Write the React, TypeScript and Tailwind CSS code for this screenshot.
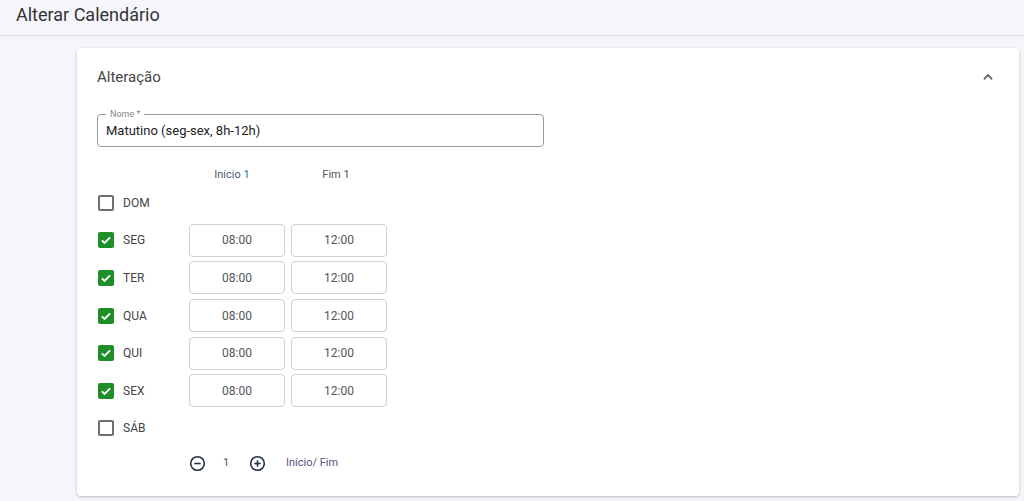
import React from "react";

type Day = { label: string; checked: boolean };

const DAYS: Day[] = [
  { label: "DOM", checked: false },
  { label: "SEG", checked: true },
  { label: "TER", checked: true },
  { label: "QUA", checked: true },
  { label: "QUI", checked: true },
  { label: "SEX", checked: true },
  { label: "SÁB", checked: false },
];

function Check({ checked }: { checked: boolean }) {
  if (checked) {
    return (
      <span className="flex h-[16px] w-[16px] items-center justify-center rounded-[2px] bg-[#1e8f28]">
        <svg viewBox="0 0 24 24" className="h-[14px] w-[14px]" fill="none" stroke="#fff" strokeWidth="3.2">
          <path d="M5 12.5l4.5 4.5L19 7.5" />
        </svg>
      </span>
    );
  }
  return <span className="h-[16px] w-[16px] rounded-[2px] border-2 border-[#6f6f6f] bg-white" />;
}

function TimeBox({ value }: { value: string }) {
  return (
    <div className="flex h-[33px] w-[96px] items-center justify-center rounded-[4px] border border-[#d0d0d0] bg-white text-[12px] text-[#555]">
      {value}
    </div>
  );
}

function CircleIcon({ plus }: { plus?: boolean }) {
  return (
    <svg viewBox="0 0 24 24" className="h-[17px] w-[17px]" fill="none" stroke="#27324a" strokeWidth="2.3">
      <circle cx="12" cy="12" r="9.6" />
      <path d="M7.5 12h9" />
      {plus && <path d="M12 7.5v9" />}
    </svg>
  );
}

export default function App() {
  return (
    <div className="min-h-[501px] bg-[#f5f5fc] font-['Roboto',sans-serif]">
      <header className="flex h-[36px] items-center border-b border-[#dcdce4] px-[16px]">
        <h1 className="text-[18px] text-[#333] -mt-[6px]">Alterar Calendário</h1>
      </header>

      <div className="ml-[77px] mr-[5px] mt-[12px] rounded-[4px] bg-white px-[20px] pb-[23px] pt-[20px] shadow-[0_1px_3px_rgba(0,0,0,0.25)]">
        <div className="flex h-[18px] items-center justify-between">
          <h2 className="text-[15px] text-[#444]">Alteração</h2>
          <svg viewBox="0 0 24 24" className="mr-[2px] h-[18px] w-[18px]" fill="none" stroke="#666" strokeWidth="2.4">
            <path d="M6.5 15l5.5-5.5 5.5 5.5" />
          </svg>
        </div>

        <div className="relative mt-[28px] h-[33px] w-[447px] rounded-[4px] border border-[#9a9a9a]">
          <span className="absolute -top-[7px] left-[8px] bg-white px-[4px] text-[9px] leading-[12px] text-[#888]">
            Nome *
          </span>
          <div className="flex h-full items-center pl-[8px] text-[13px] text-[#222]">
            Matutino (seg-sex, 8h-12h)
          </div>
        </div>

        <div className="mt-[21px] grid grid-cols-[86px_96px_96px] gap-x-[6px]">
          <div />
          <div className="pr-[10px] text-center text-[11px] leading-[14px] text-[#4a5a6e]">
            Início <span className="text-[#2b6cb0]">1</span>
          </div>
          <div className="pr-[6px] text-center text-[11px] leading-[14px] text-[#555]">Fim 1</div>
        </div>

        <div className="mt-[2px] flex flex-col">
          {DAYS.map((d) => (
            <div key={d.label} className="grid h-[37.6px] grid-cols-[86px_96px_96px] items-center gap-x-[6px]">
              <div className="flex items-center gap-[9px] pl-[1px]">
                <Check checked={d.checked} />
                <span className="text-[12px] text-[#444]">{d.label}</span>
              </div>
              {d.checked && (
                <>
                  <TimeBox value="08:00" />
                  <TimeBox value="12:00" />
                </>
              )}
            </div>
          ))}
        </div>

        <div className="ml-[92px] mt-[6px] flex h-[20px] items-center">
          <CircleIcon />
          <span className="ml-[14px] w-[12px] text-center text-[11px] text-[#555]">1</span>
          <span className="ml-[17px] flex">
            <CircleIcon plus />
          </span>
          <span className="ml-[20px] text-[11px] text-[#5b4f86]">Início/ Fim</span>
        </div>
      </div>
    </div>
  );
}
